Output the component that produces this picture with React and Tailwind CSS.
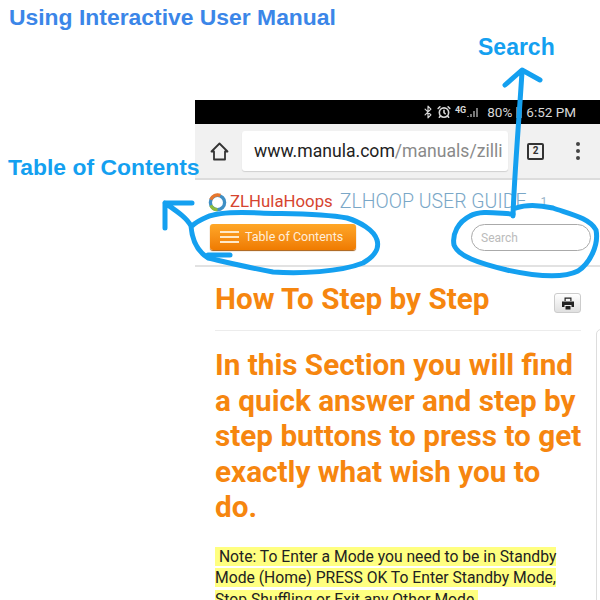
import { Bluetooth, AlarmClock } from "lucide-react";

const roboto = "font-['Roboto',sans-serif]";

function StatusBar() {
  return (
    <div className="h-[24px] shrink-0 bg-black flex items-center justify-end pr-[24px] text-[#d8d8d8] text-[13.5px]">
      <Bluetooth size={14} strokeWidth={2} className="mr-[2px]" />
      <AlarmClock size={14} strokeWidth={2.8} className="mr-[4px]" />
      <span className="text-[9px] font-bold leading-none mb-[4px]">4G</span>
      <svg width="15" height="11" viewBox="0 0 15 11" className="mr-[6px]">
        <path d="M2 10v-1M5 10V7M8 10V4M11 10V1" stroke="#aaa" strokeWidth="1.4" />
      </svg>
      <span>80%</span>
      <span className="w-[6px] h-[11px] bg-[#777] mx-[4px]" />
      <span>6:52 PM</span>
    </div>
  );
}

function BrowserBar() {
  return (
    <div className="h-[56px] shrink-0 bg-[#f1f1f1] border-b-2 border-[#dcdcdc] flex items-center">
      <div className="w-[47px] flex justify-center pl-[1px]">
        <svg width="19" height="19" viewBox="0 0 19 19" fill="none" stroke="#333" strokeWidth="1.8" strokeLinejoin="round">
          <path d="M1.5 9.5L9.5 1.5L17.5 9.5H15V17.5H4V9.5Z" />
        </svg>
      </div>
      <div className="w-[266px] h-[40px] bg-white rounded-[3px] shadow-[0_1px_1px_#d0d0d0] flex items-center pl-[12px] text-[17.6px] overflow-hidden whitespace-nowrap">
        <span className="text-[#222]">www.manula.com</span>
        <span className="text-[#8a8a8a]">/manuals/zilli</span>
      </div>
      <div className="ml-[19px] w-[17px] h-[17px] border-2 border-[#333] rounded-[2px] flex items-center justify-center text-[10px] font-bold text-[#333] leading-none">
        2
      </div>
      <div className="ml-[32px] flex flex-col gap-[3px]">
        <span className="w-[4px] h-[4px] rounded-full bg-[#444]" />
        <span className="w-[4px] h-[4px] rounded-full bg-[#444]" />
        <span className="w-[4px] h-[4px] rounded-full bg-[#444]" />
      </div>
    </div>
  );
}

function SiteHeader() {
  return (
    <div className="h-[87px] shrink-0 border-b-2 border-[#e2e2e2]">
      <div className="h-[44px] flex items-center pl-[13px] whitespace-nowrap">
        <svg width="19" height="19" viewBox="0 0 20 20">
          <circle cx="10" cy="10" r="7.5" fill="none" stroke="#3f8fc4" strokeWidth="3.5" />
          <path d="M3 7a7.5 7.5 0 0 1 10-4.5" fill="none" stroke="#e8762c" strokeWidth="3.5" />
          <path d="M3 13a7.5 7.5 0 0 0 7 4.5" fill="none" stroke="#8dbb3c" strokeWidth="3.5" />
        </svg>
        <span className="ml-[3px] text-[16.8px] text-[#d6452f]">ZLHulaHoops</span>
        <span className="ml-[7px] text-[19.5px] font-light text-[#7aa7c7]">ZLHOOP USER GUIDE</span>
        <span className="ml-[14px] text-[12px] text-[#9ab5c9]">1</span>
      </div>
      <div className="flex items-start justify-between pl-[15px] pr-[9px]">
        <button className="w-[146px] h-[26px] rounded-[3px] bg-gradient-to-b from-[#ffa726] to-[#ef7b00] shadow-[0_1px_1px_#a85c10] flex items-center pl-[10px] text-[#ffeeda] text-[12.5px] whitespace-nowrap">
          <svg width="19" height="12" viewBox="0 0 19 12" className="mr-[6px]">
            <path d="M0 1h19M0 6h19M0 11h19" stroke="#ffe9c9" strokeWidth="1.8" />
          </svg>
          Table of Contents
        </button>
        <div className="w-[120px] h-[27px] rounded-full border border-[#aaaaaa] flex items-center pl-[9px] text-[12px] text-[#bbbbbb]">
          Search
        </div>
      </div>
    </div>
  );
}

function Article() {
  return (
    <div className="relative flex-1 min-h-0 pl-[20px] pr-[19px] pt-[12px]">
      <div className="flex items-start justify-between border-b border-[#ececec] h-[52px]">
        <h1 className="text-[29.7px] font-bold text-[#f6860f] leading-[40px]">How To Step by Step</h1>
        <div className="mt-[14px] w-[27px] h-[20px] rounded-[3px] bg-gradient-to-b from-white to-[#e0e0e0] border border-[#cccccc] flex items-center justify-center">
          <svg width="14" height="13" viewBox="0 0 14 13" fill="#222">
            <path d="M3.5 0.5h7v3.5h-1.2V1.7H4.7V4H3.5zM1 4.5h12v5.5h-2.5V8h-7v2H1zM4.5 9h5v3.5h-5z" />
          </svg>
        </div>
      </div>
      <h2 className="mt-[16px] text-[29.7px] font-bold text-[#f6860f] leading-[35.6px] w-[368px]">
        In this Section you will find a quick answer and step by step buttons to press to get exactly what wish you to do.
      </h2>
      <p className="mt-[21px] text-[15.7px] leading-[21.5px] text-[#222] w-[350px]">
        <span className="bg-[#ffff80]">
          &nbsp;Note: To Enter a Mode you need to be in Standby Mode (Home) PRESS OK To Enter Standby Mode, Stop Shuffling or Exit any Other Mode.
        </span>
      </p>
      <div className="absolute left-[401px] top-[62px] w-[10px] h-[300px] border border-[#dddddd] rounded-l-[5px]" />
    </div>
  );
}

function Scribbles() {
  return (
    <svg className="absolute inset-0 pointer-events-none" width="600" height="600" viewBox="0 0 600 600" fill="none">
      <g stroke="#14a0f0" strokeLinecap="round" strokeLinejoin="round" strokeWidth="5">
        <path d="M513 216C514 180 519 120 522 72M505 85L522 70L540 80" />
        <path d="M513 214C495 213 480 210 470 216C458 222 452 234 454 245C458 256 478 263 507 270C530 275 560 280 578 271C590 263 599 245 596 230C590 218 570 214 553 208C540 205 527 204 516 208" />
        <path d="M165 228V203H192M165 203C178 212 187 218 191 226C192 240 197 251 208 258C230 263 250 268 273 272C300 274 340 272 363 263C372 258 380 250 377 240C374 230 360 222 347 218C320 213 285 214 260 213C240 212 218 212 207 217C200 220 195 223 192 226" />
        <path d="M208 255H230" />
      </g>
    </svg>
  );
}

export default function App() {
  return (
    <div className={`relative w-[600px] h-[600px] bg-white overflow-hidden ${roboto}`}>
      <div className="h-[100px] pl-[9px]">
        <div className="text-[22.9px] font-bold text-[#3b86e8] font-['Liberation_Sans',sans-serif]">
          Using Interactive User Manual
        </div>
      </div>
      <div className="ml-[195px] h-[500px] flex flex-col">
        <StatusBar />
        <BrowserBar />
        <SiteHeader />
        <Article />
      </div>
      <div className="absolute left-[478px] top-[30px] text-[23px] font-bold text-[#14a0f0] font-['Liberation_Sans',sans-serif]">
        Search
      </div>
      <div className="absolute left-[8px] top-[150px] text-[22.9px] font-bold text-[#14a0f0] font-['Liberation_Sans',sans-serif]">
        Table of Contents
      </div>
      <Scribbles />
    </div>
  );
}
